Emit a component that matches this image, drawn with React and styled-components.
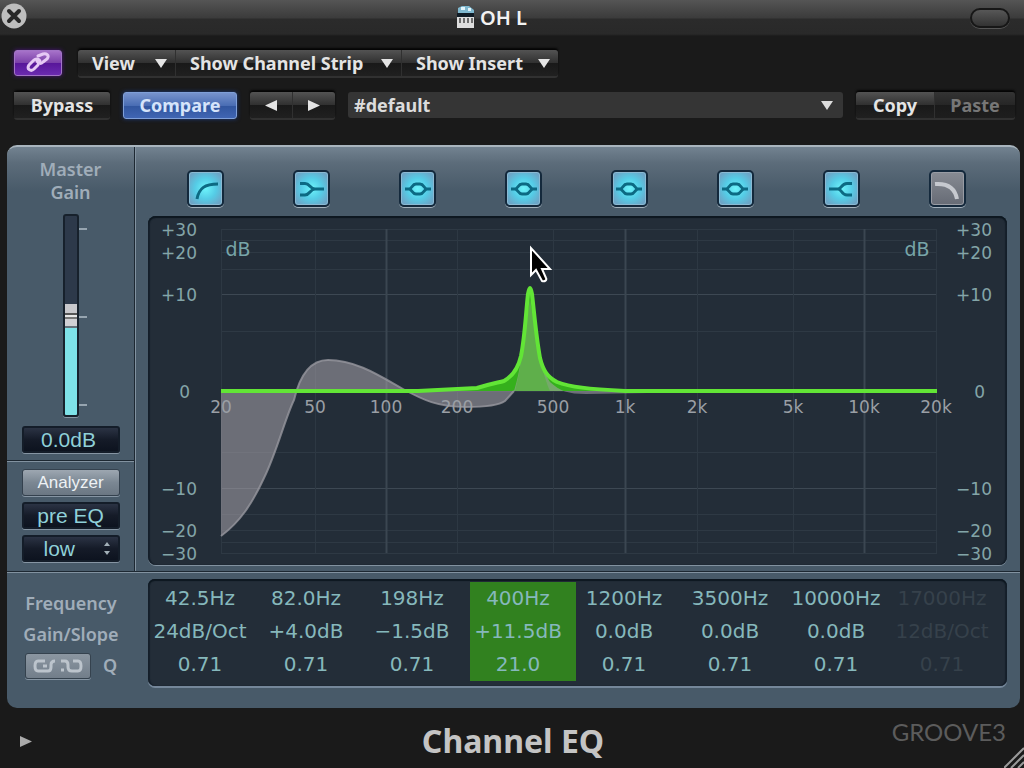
import React, { useState } from "react";
import styled, { createGlobalStyle } from "styled-components";

const bands = [
  { shape: "lowcut", freq: "42.5Hz", gain: "24dB/Oct", q: "0.71", on: true },
  { shape: "lowshelf", freq: "82.0Hz", gain: "+4.0dB", q: "0.71", on: true },
  { shape: "bell", freq: "198Hz", gain: "−1.5dB", q: "0.71", on: true },
  { shape: "bell", freq: "400Hz", gain: "+11.5dB", q: "21.0", on: true },
  { shape: "bell", freq: "1200Hz", gain: "0.0dB", q: "0.71", on: true },
  { shape: "bell", freq: "3500Hz", gain: "0.0dB", q: "0.71", on: true },
  { shape: "highshelf", freq: "10000Hz", gain: "0.0dB", q: "0.71", on: true },
  { shape: "highcut", freq: "17000Hz", gain: "12dB/Oct", q: "0.71", on: false },
];

const freqLines = [
  { x: 73, label: "20" },
  { x: 167, label: "50" },
  { x: 238, label: "100", strong: true },
  { x: 309, label: "200" },
  { x: 405, label: "500" },
  { x: 477, label: "1k", strong: true },
  { x: 549, label: "2k" },
  { x: 645, label: "5k" },
  { x: 716, label: "10k", strong: true },
  { x: 788, label: "20k" },
];

const gainLines = [
  { y: 13, label: "+30" },
  { y: 24 },
  { y: 36, label: "+20" },
  { y: 53 },
  { y: 78, label: "+10", strong: true },
  { y: 115 },
  { y: 175, label: "0" },
  { y: 236 },
  { y: 272, label: "−10", strong: true },
  { y: 298 },
  { y: 314, label: "−20" },
  { y: 326 },
  { y: 337, label: "−30" },
];

const shapes = {
  lowcut: "M7 26 C9 15 15 11 28 11",
  lowshelf: "M4 10.5 H9 C14 10.5 14 16 19 16 H28 M4 22 H9 C14 22 14 16 19 16",
  bell: "M3 16 H7 C10 16 10 11 14 11 H18 C22 11 22 16 25 16 H29 M7 16 C10 16 10 21 14 21 H18 C22 21 22 16 25 16",
  highshelf: "M27 10.5 H22 C16 10.5 17 16 13 16 H4 M27 22 H22 C16 22 17 16 13 16",
  highcut: "M4 11 C17 10 24 15 26 26",
};

function BandIcon({ shape }) {
  return (
    <svg width="32" height="32" viewBox="0 0 32 32" aria-hidden="true">
      <path
        d={shapes[shape]}
        fill="none"
        stroke="currentColor"
        strokeWidth={shape === "highcut" ? 4 : 3}
      />
    </svg>
  );
}

function Arrow({ dir = "down" }) {
  const d = {
    down: "M0 1 H12 L6 10 Z",
    left: "M12 0 V11 L0 5.5 Z",
    right: "M0 0 V11 L12 5.5 Z",
  };
  return (
    <svg width="12" height="11" viewBox="0 0 12 11" aria-hidden="true">
      <path d={d[dir]} fill="currentColor" />
    </svg>
  );
}

function EqGraph() {
  const green =
    "M73 175 L270 175 L329 172 C342 168 348 167 356 165 C365 160 370 153 373 140 C377 120 378 95 380 78 Q382 66 384 78 C386 95 388 120 392 142 C395 154 399 161 409 166 C422 171 440 173 477 175 L789 175";
  const grey =
    "M73 320 C92 306 104 288 116 262 C128 238 138 200 146 184 C153 154 166 144 180 144 C208 144 232 160 255 173 C275 184 290 191 318 191 C337 191 350 190 357 185 L366 175 C373 155 377 115 382 84 C387 115 391 148 402 166 C412 175 420 178 438 178 L500 177 L789 175";
  return (
    <Graph viewBox="0 0 859 349" role="img" aria-label="EQ curve">
      {gainLines.map((l) => (
        <path key={l.y} d={`M73 ${l.y + 0.5} H789`} stroke={l.strong ? "#3d4853" : "#2e3944"} />
      ))}
      {freqLines.map((l) => (
        <path
          key={l.x}
          d={`M${l.x + 0.5} 13 V337`}
          stroke={l.strong ? "#3b4651" : "#2d3843"}
          strokeWidth={l.strong ? 2 : 1}
        />
      ))}
      <path d={`${green} Z`} fill="#35b01c" />
      <path d={`${grey} L73 175 Z`} fill="#a9a4ab" fillOpacity=".55" />
      <path d="M367 175 C374 150 377 110 382 84 C387 110 391 150 402 175 Z" fill="#50b437" opacity=".6" />
      <path
        d="M73 320 C92 306 104 288 116 262 C128 238 138 200 146 184 C153 154 166 144 180 144 C208 144 232 160 255 173 C275 184 290 191 318 191 C337 191 350 190 357 185 L366 175"
        fill="none"
        stroke="#96969e"
        strokeWidth="2"
        opacity=".8"
      />
      <path d={green} fill="none" stroke="#62e536" strokeWidth="4" strokeLinejoin="round" />
      {freqLines.map((l) => (
        <FreqText key={l.label} x={l.x} y="197">{l.label}</FreqText>
      ))}
      {gainLines.filter((l) => l.label).map((l) => (
        <React.Fragment key={l.label}>
          <GainText x={l.label === "0" ? 42 : 49} y={l.y + 7}>{l.label}</GainText>
          <GainText x={l.label === "0" ? 837 : 844} y={l.y + 7}>{l.label}</GainText>
        </React.Fragment>
      ))}
      <UnitText x="90" y="40">dB</UnitText>
      <UnitText x="769" y="40">dB</UnitText>
      <path
        d="M383 32 V59 L388 54 L394 65 C397 66 399 64 398 62 L394 53 H402 Z"
        fill="#000"
        stroke="#fff"
        strokeWidth="2"
      />
    </Graph>
  );
}

function App() {
  const [gain, setGain] = useState(0);
  const [selected, setSelected] = useState(3);

  return (
    <>
      <GlobalStyle />
      <Window>
        <TitleBar>
          <CloseButton aria-label="Close">
            <svg width="26" height="26" viewBox="0 0 26 26">
              <circle cx="13" cy="13" r="12.5" fill="#bebebe" />
              <path d="M8 8 L18 18 M18 8 L8 18" stroke="#272727" strokeWidth="4" strokeLinecap="round" />
            </svg>
          </CloseButton>
          <Title>
            <svg width="19" height="24" viewBox="0 0 19 24" aria-hidden="true">
              <path d="M2 3 L6 1 H13 L18 5 V9 H2 Z" fill="#7fb8cf" />
              <path d="M5 2 H9 V5 H5 Z M12 3 H15 V6 H12 Z" fill="#e2f4fa" />
              <path d="M1 8 H18 V12 H1 Z" fill="#101c26" />
              <path d="M1 12 H18 V23 H1 Z" fill="#dedede" />
              <path d="M4 13 V18 M8 13 V18 M12 13 V18 M16 13 V18" stroke="#6d6d6d" strokeWidth="2" />
            </svg>
            OH L
          </Title>
          <Pill aria-label="Toggle toolbar" />
        </TitleBar>

        <Toolbar>
          <LinkButton aria-label="Link">
            <svg width="26" height="22" viewBox="0 0 26 22" fill="none" stroke="#e6c9f5" strokeWidth="3" strokeLinecap="round">
              <path d="M13 13 L9 17 C6 20 1 17 4 13 L9 8 C11 6 14 7 15 9" />
              <path d="M12 9 C13 12 16 12 18 10 L22 7 C25 3 21 1 18 2 L13 4" />
            </svg>
          </LinkButton>
          <Group>
            <MenuButton $width={98} aria-haspopup="menu">View <Arrow /></MenuButton>
            <MenuButton $width={226} aria-haspopup="menu">Show Channel Strip <Arrow /></MenuButton>
            <MenuButton $width={156} aria-haspopup="menu">Show Insert <Arrow /></MenuButton>
          </Group>
        </Toolbar>

        <Toolbar>
          <Group><BarButton $width={96}>Bypass</BarButton></Group>
          <CompareButton>Compare</CompareButton>
          <Group>
            <BarButton $width={43} aria-label="Previous setting"><Arrow dir="left" /></BarButton>
            <BarButton $width={42} aria-label="Next setting"><Arrow dir="right" /></BarButton>
          </Group>
          <Preset>
            <PresetSelect aria-label="Setting"><option>#default</option></PresetSelect>
            <Arrow />
          </Preset>
          <Group>
            <BarButton $width={79}>Copy</BarButton>
            <BarButton $width={80} disabled>Paste</BarButton>
          </Group>
        </Toolbar>

        <Panel>
          <Side>
            <Master>
              <SideLabel htmlFor="gain">Master<br />Gain</SideLabel>
              <SliderRow>
                <GainSlider
                  id="gain"
                  type="range"
                  min="-30"
                  max="30"
                  value={gain}
                  onChange={(e) => setGain(Number(e.target.value))}
                  style={{ "--fill": `${((gain + 30) / 60) * 100}%` }}
                />
                <Ticks><i /><i /><i /></Ticks>
              </SliderRow>
              <Readout aria-label="Master gain value" value={`${gain.toFixed(1)}dB`} readOnly />
            </Master>
            <Analyzer>
              <AnalyzerButton>Analyzer</AnalyzerButton>
              <DarkButton>pre EQ</DarkButton>
              <Resolution>
                <ResolutionSelect aria-label="Analyzer resolution"><option>low</option></ResolutionSelect>
                <svg width="6" height="15" viewBox="0 0 6 15" aria-hidden="true">
                  <path d="M0 5 L3 1 L6 5 Z M0 10 H6 L3 14 Z" fill="#a3b0b8" />
                </svg>
              </Resolution>
            </Analyzer>
          </Side>

          <Main>
            <BandButtons>
              {bands.map((b, i) => (
                <BandButton key={b.freq} $on={b.on} aria-label={`Band ${i + 1}`} onClick={() => setSelected(i)}>
                  <BandIcon shape={b.shape} />
                </BandButton>
              ))}
            </BandButtons>
            <Screen><EqGraph /></Screen>
          </Main>

          <ParamLabels>
            <span>Frequency</span>
            <span>Gain/Slope</span>
            <QRow>
              <QLink aria-label="Gain-Q couple">
                <svg width="50" height="16" viewBox="0 0 50 16" fill="none" stroke="#bcc4cc" strokeWidth="3">
                  <path d="M12 3 H5 Q2 3 2 8 Q2 13 5 13 H15 Q18 13 18 9 V7 Q18 3 22 3" />
                  <path d="M38 13 H45 Q48 13 48 8 Q48 3 45 3 H40 M28 3 H32 Q35 3 35 7 V9 Q35 13 39 13 M10 8 H14 M28 12 H31" />
                </svg>
              </QLink>
              <span>Q</span>
            </QRow>
          </ParamLabels>
          <ParamArea>
            <ParamScreen>
              <ParamTable aria-label="Band parameters">
                <tbody>
                  {["freq", "gain", "q"].map((key) => (
                    <tr key={key}>
                      {bands.map((b, i) => (
                        <ParamCell key={b.freq} $selected={i === selected} $on={b.on}>{b[key]}</ParamCell>
                      ))}
                    </tr>
                  ))}
                </tbody>
              </ParamTable>
            </ParamScreen>
          </ParamArea>
        </Panel>

        <Footer>
          <Disclosure aria-label="Show more"><Arrow dir="right" /></Disclosure>
          <PluginName>Channel EQ</PluginName>
          <Brand>GROOVE3</Brand>
          <Grip width="20" height="24" viewBox="0 0 20 24" aria-hidden="true">
            <path d="M0 24 L20 4 M7 24 L20 11 M14 24 L20 18" stroke="#9a9a9a" strokeWidth="2" />
          </Grip>
        </Footer>
      </Window>
    </>
  );
}

const GlobalStyle = createGlobalStyle`
  * { box-sizing: border-box; }
  body {
    margin: 0;
    background: #1a1a1a;
    font-family: "Noto Sans", sans-serif;
  }
  button, select, input {
    margin: 0;
    padding: 0;
    border: 0;
    font: inherit;
    color: inherit;
  }
  svg { display: block; flex: none; }
`;

const Window = styled.div`
  display: flex;
  flex-direction: column;
  min-height: 100vh;
  overflow: hidden;
  background: #1a1a1a;
`;

const TitleBar = styled.header`
  display: grid;
  grid-template-columns: 1fr auto 1fr;
  align-items: center;
  height: 36px;
  padding: 0 14px 0 1px;
  margin-bottom: 13px;
  background: linear-gradient(#555 0, #3b3b3b 18px, #2b2b2b 19px, #292929 34px, #1a1a1a);
`;

const CloseButton = styled.button`
  width: 26px;
  height: 26px;
  margin-bottom: 4px;
  background: none;
`;

const Title = styled.h1`
  display: flex;
  align-items: center;
  gap: 5px;
  margin: 0;
  padding: 0 28px 2px 0;
  color: #f2f2f2;
  font-size: 20px;
  font-weight: 600;
`;

const Pill = styled.button`
  justify-self: end;
  width: 40px;
  height: 20px;
  border: 2px solid #171717;
  border-radius: 10px;
  background: linear-gradient(#575757, #333);
  box-shadow: 0 1px 0 #555;
`;

const Toolbar = styled.div`
  display: flex;
  align-items: center;
  gap: 13px;
  height: 28px;
  margin: 0 9px 14px 14px;
  color: #e4e4e4;
  font-size: 18px;
  font-weight: 700;
`;

const LinkButton = styled.button`
  display: grid;
  place-items: center;
  width: 48px;
  height: 26px;
  margin-right: 3px;
  border: 1px solid #a273c6;
  border-radius: 3px;
  background: linear-gradient(#a672c9, #7a3fa8 50%, #58169a 51%, #6b2bb0);
  box-shadow: 0 0 4px #4c1580;
`;

const Group = styled.div`
  display: flex;
  height: 26px;
  border-radius: 3px;
  box-shadow: 0 -2px 2px #050505, 0 2px 0 #313131;
`;

const BarButton = styled.button`
  display: flex;
  align-items: center;
  justify-content: center;
  width: ${(p) => p.$width}px;
  background: linear-gradient(#535353, #303030 50%, #191919 51%, #202020);
  border-right: 1px solid #303030;
  &:first-child { border-radius: 3px 0 0 3px; }
  &:last-child { border-radius: 0 3px 3px 0; border-right: 0; }
  &:disabled {
    color: #777;
    background: linear-gradient(#343434, #262626 50%, #1a1a1a 51%, #1e1e1e);
  }
`;

const MenuButton = styled(BarButton)`
  justify-content: space-between;
  padding: 0 8px 0 14px;
`;

const CompareButton = styled.button`
  width: 114px;
  height: 27px;
  border: 1px solid #7f9fd8;
  border-radius: 3px;
  color: #d6e4fa;
  background: linear-gradient(#7793cd, #4a6db4 50%, #31559e 51%, #4065b3);
  box-shadow: 0 0 4px #1e3c80;
`;

const Preset = styled.div`
  display: flex;
  align-items: center;
  flex: 1;
  height: 26px;
  padding-right: 10px;
  border-radius: 3px;
  background: #353535;
  color: #dcdcdc;
`;

const PresetSelect = styled.select`
  flex: 1;
  height: 26px;
  padding-left: 6px;
  appearance: none;
  background: none;
`;

const Panel = styled.main`
  display: grid;
  grid-template-columns: 128px 1fr;
  margin: 12px 4px 0 7px;
  border-top: 2px solid #a9b5be;
  border-radius: 10px;
  overflow: hidden;
  background: linear-gradient(#728290 0, #5c6c7a 16px, #485a69 44px);
`;

const Side = styled.div`
  display: flex;
  flex-direction: column;
  border-right: 1px solid #1d2832;
`;

const Master = styled.section`
  display: flex;
  flex-direction: column;
  align-items: center;
  height: 314px;
  padding-top: 11px;
`;

const SideLabel = styled.label`
  color: #a0adb9;
  font-size: 18px;
  font-weight: 600;
  line-height: 23px;
  text-align: center;
`;

const SliderRow = styled.div`
  display: grid;
  grid-template-columns: 12px 16px 12px;
  height: 203px;
  margin-top: 10px;
  > input { grid-column: 2; }
`;

const GainSlider = styled.input`
  appearance: none;
  writing-mode: vertical-lr;
  direction: rtl;
  width: 16px;
  height: 203px;
  border: 2px solid #17212c;
  border-radius: 3px;
  background: linear-gradient(to top, #7ee2e8 var(--fill), #2d394a var(--fill));
  box-shadow: 0 1px 0 #8695a3;
  &::-webkit-slider-thumb {
    appearance: none;
    width: 12px;
    height: 24px;
    background: linear-gradient(#c8c8cc 0 9px, #555 9px 11px, #e6e6e6 11px 13px, #777 13px 15px, #d0d0d4 15px 22px, #66717a 22px);
  }
`;

const Ticks = styled.div`
  display: flex;
  flex-direction: column;
  justify-content: space-between;
  padding: 14px 0 11px;
  i {
    width: 8px;
    height: 2px;
    background: #97a5b0;
  }
`;

const Readout = styled.input`
  width: 98px;
  height: 27px;
  margin-top: 9px;
  padding-right: 4px;
  border: 2px solid #141d29;
  border-radius: 3px;
  background: linear-gradient(#2b3344, #151b28 50%, #0d131f);
  box-shadow: 0 1px 0 #8695a3;
  color: #8fd0d8;
  font-family: "Liberation Sans", sans-serif;
  font-size: 21px;
  text-align: center;
`;

const Analyzer = styled.section`
  display: flex;
  flex-direction: column;
  align-items: center;
  gap: 6px;
  flex: 1;
  padding-top: 7px;
  border-top: 1px solid #8292a0;
  box-shadow: 0 -1px 0 #1d2832;
  font-family: "Liberation Sans", sans-serif;
`;

const DarkButton = styled.button`
  width: 98px;
  height: 27px;
  border: 2px solid #141d29;
  border-radius: 3px;
  background: linear-gradient(#2b3344, #151b28 50%, #0d131f);
  box-shadow: 0 1px 0 #8695a3;
  color: #8fd0d8;
  font-size: 21px;
  line-height: 22px;
`;

const AnalyzerButton = styled(DarkButton)`
  border: 1px solid #34414e;
  background: linear-gradient(#9da7b1, #7b8793 50%, #6b7783);
  color: #eef2f5;
  font-size: 17px;
`;

const Resolution = styled.div`
  display: flex;
  align-items: center;
  width: 98px;
  height: 27px;
  padding-right: 8px;
  border: 2px solid #141d29;
  border-radius: 3px;
  background: linear-gradient(#2b3344, #151b28 50%, #0d131f);
  box-shadow: 0 1px 0 #8695a3;
  color: #8fd0d8;
  font-size: 21px;
`;

const ResolutionSelect = styled.select`
  flex: 1;
  min-width: 0;
  height: 23px;
  padding-left: 20px;
  appearance: none;
  background: none;
`;

const Main = styled.div`
  padding: 23px 13px 7px 12px;
  border-left: 1px solid #8292a0;
`;

const BandButtons = styled.div`
  display: grid;
  grid-template-columns: repeat(8, 1fr);
  justify-items: center;
  padding: 0 7px 9px 5px;
`;

const BandButton = styled.button`
  display: grid;
  place-items: center;
  width: 37px;
  height: 37px;
  border: 2px solid #14293c;
  border-radius: 5px;
  color: ${(p) => (p.$on ? "#0c6a83" : "#c6c9cf")};
  background: ${(p) =>
    p.$on
      ? "radial-gradient(circle, #6df4fb 0, #55cce6 45%, #6da4c6 85%)"
      : "linear-gradient(#878b93, #666b75)"};
  box-shadow: inset 0 0 0 1px ${(p) => (p.$on ? "#8bb9d2" : "#989ca4")}, 0 1px 0 #a3b1bc;
`;

const Screen = styled.div`
  border-radius: 8px;
  background: #232d38;
  box-shadow: inset 0 2px 1px #0d1720, inset 2px 0 1px #16202b, inset -2px 0 1px #16202b, 0 1px 0 #8292a0;
`;

const Graph = styled.svg`
  width: 100%;
  height: auto;
  font-family: "DejaVu Sans", sans-serif;
`;

const FreqText = styled.text`
  fill: #9a9fa5;
  font-size: 17px;
  text-anchor: middle;
`;

const GainText = styled.text`
  fill: #83a5a8;
  font-size: 17px;
  text-anchor: end;
`;

const UnitText = styled.text`
  fill: #78a5a8;
  font-size: 19px;
  text-anchor: middle;
`;

const ParamLabels = styled.div`
  display: flex;
  flex-direction: column;
  align-items: center;
  padding-top: 15px;
  border-top: 1px solid #8292a0;
  box-shadow: 0 -1px 0 #1d2832;
  color: #a0adb9;
  font-size: 18px;
  font-weight: 600;
  line-height: 31px;
`;

const QRow = styled.div`
  display: flex;
  align-items: center;
  gap: 12px;
`;

const QLink = styled.button`
  display: grid;
  place-items: center;
  width: 66px;
  height: 26px;
  border: 1px solid #35424e;
  border-radius: 3px;
  background: linear-gradient(#8b96a1, #727e8a);
  box-shadow: 0 1px 0 #8695a3;
`;

const ParamArea = styled.div`
  padding: 6px 13px 22px 13px;
  border-top: 1px solid #8292a0;
  box-shadow: 0 -1px 0 #1d2832;
`;

const ParamScreen = styled.div`
  padding: 3px 7px 5px 4px;
  border-radius: 7px;
  background: #232d38;
  box-shadow: inset 0 2px 1px #0d1720, inset 2px 0 1px #16202b, inset -2px 0 1px #16202b, 0 2px 0 #75879a;
`;

const ParamTable = styled.table`
  width: 100%;
  table-layout: fixed;
  border-collapse: collapse;
  font-family: "DejaVu Sans", sans-serif;
  font-size: 20px;
`;

const ParamCell = styled.td`
  height: 33px;
  padding: 0 10px 1px 0;
  color: ${(p) => (p.$on ? "#86b8bc" : "#36414b")};
  background: ${(p) => (p.$selected ? "#31811f" : "none")};
  text-align: center;
  white-space: nowrap;
`;

const Footer = styled.footer`
  display: grid;
  grid-template-columns: 1fr auto 1fr;
  align-items: center;
  flex: 1;
  position: relative;
  padding: 6px 18px 0 20px;
`;

const Disclosure = styled.button`
  width: 14px;
  background: none;
  color: #aaa;
`;

const PluginName = styled.h2`
  margin: 0;
  color: #c4c4c4;
  font-size: 32px;
  font-weight: 700;
  line-height: 40px;
`;

const Brand = styled.span`
  justify-self: end;
  padding-bottom: 18px;
  color: #5c5c5c;
  font-family: Lato, sans-serif;
  font-size: 24px;
  font-weight: 400;
  line-height: 28px;
`;

const Grip = styled.svg`
  position: absolute;
  right: 0;
  bottom: 0;
`;

export default App;
